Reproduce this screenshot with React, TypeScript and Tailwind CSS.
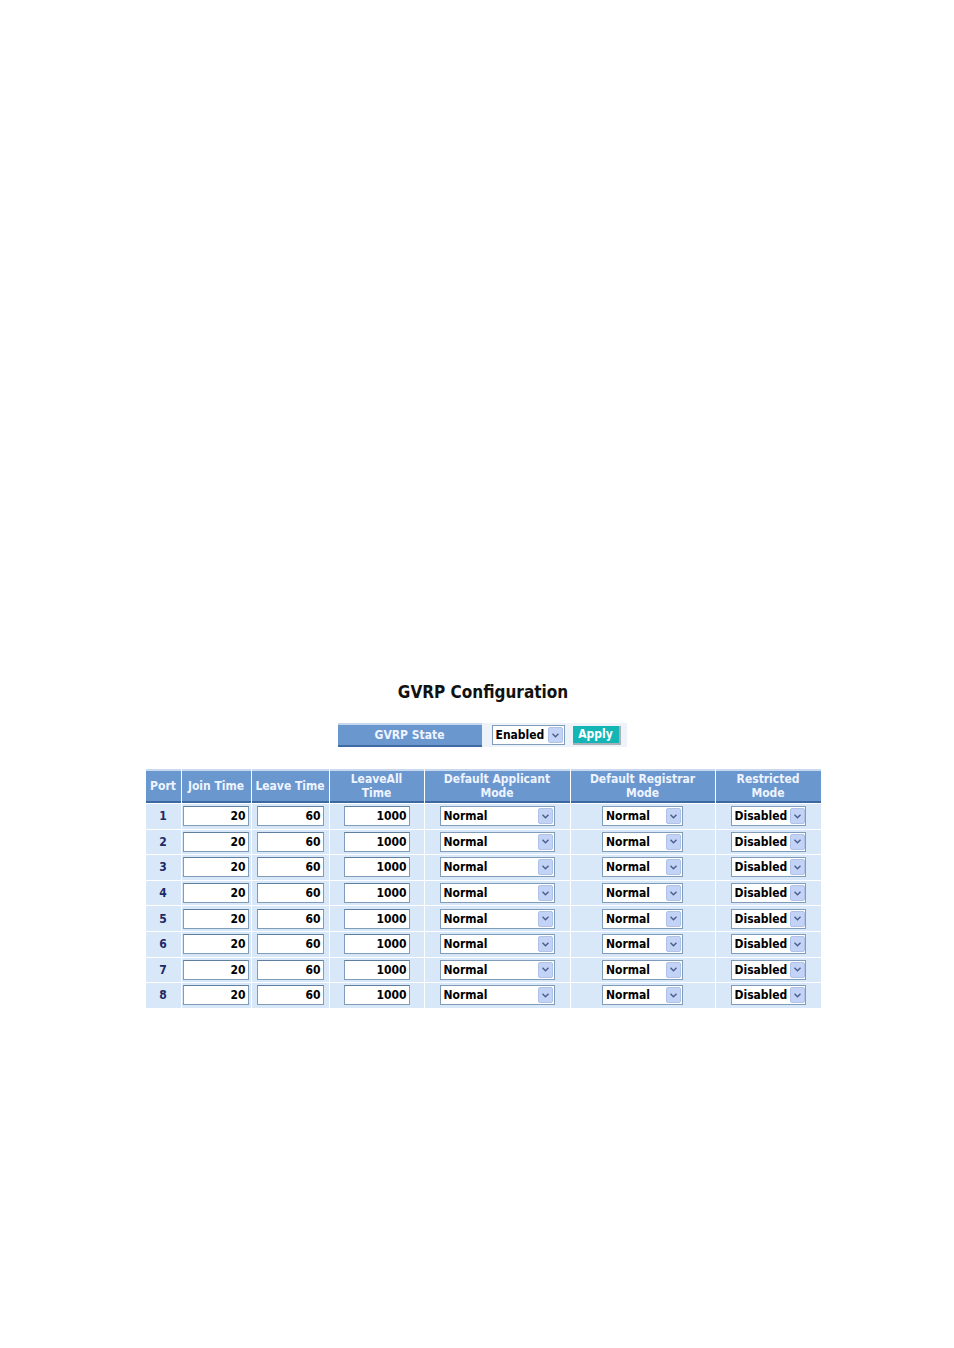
const ports = [1, 2, 3, 4, 5, 6, 7, 8];

const font = { fontFamily: '"DejaVu Sans Condensed", "Noto Sans", Tahoma, sans-serif' };

function Arrow() {
  return (
    <span className="flex h-[16px] w-[15px] shrink-0 items-center justify-center rounded-[2px] bg-[#c3d3f5] border border-[#b0c2ea]">
      <svg width="7" height="5" viewBox="0 0 7 5">
        <path d="M0.5 0.8 L3.5 3.8 L6.5 0.8" fill="none" stroke="#4a5f8c" strokeWidth="1.4" />
      </svg>
    </span>
  );
}

function Select({ value, width }: { value: string; width: string }) {
  return (
    <div className={`flex h-[20px] items-center justify-between gap-[3px] bg-white border border-[#7f9db9] pl-[3px] pr-[1px] ${width}`}>
      <span className="text-[12px] font-bold leading-none text-black">{value}</span>
      <Arrow />
    </div>
  );
}

function NumInput({ value, width }: { value: string; width: string }) {
  return (
    <div className={`flex h-[20px] items-center justify-end bg-white border border-[#7f9db9] border-t-[#5f7f9f] pr-[2px] ${width}`}>
      <span className="text-[12px] font-bold leading-none text-black">{value}</span>
    </div>
  );
}

const headers = [
  { label: ["Port"], w: "w-[35px]" },
  { label: ["Join Time"], w: "w-[69px]" },
  { label: ["Leave Time"], w: "w-[77px]" },
  { label: ["LeaveAll", "Time"], w: "w-[94px]" },
  { label: ["Default Applicant", "Mode"], w: "w-[145px]" },
  { label: ["Default Registrar", "Mode"], w: "w-[144px]" },
  { label: ["Restricted", "Mode"], w: "w-[105px]" },
];

export default function App() {
  return (
    <div className="min-h-[1348px] w-full bg-white" style={font}>
      <div className="flex flex-col items-center pt-[681px]">
        <h1 className="ml-[12px] text-[17px] font-bold leading-[22px] text-[#111]">GVRP Configuration</h1>

        {/* GVRP state */}
        <div className="mt-[20px] ml-[10px] flex h-[24px] items-stretch bg-[#eef3fa] pr-[6px]">
          <div className="flex w-[144px] items-center justify-center border-t-[2px] border-t-[#c6d7ee] border-b-[2px] border-b-[#3f6aa3] bg-[#6b97cf] text-[12px] font-bold text-[#eef4ff]">
            GVRP State
          </div>
          <div className="flex items-center gap-[8px] pl-[10px]">
            <Select value="Enabled" width="w-[73px]" />
            <button className="h-[19px] w-[48px] border-r-[2px] border-b-[2px] border-[#a9b1b8] bg-[#14b5b5] text-[12px] font-bold leading-none text-white">
              Apply
            </button>
          </div>
        </div>

        {/* table */}
        <div className="mt-[22px] ml-[12px] flex flex-col gap-y-px">
          <div className="flex gap-x-px">
            {headers.map((h) => (
              <div
                key={h.label.join()}
                className={`flex h-[34px] flex-col items-center justify-center border-t-[2px] border-t-[#c9d9ef] border-b-[2px] border-b-[#3d69a2] bg-[#6b97cf] text-[12px] font-bold leading-[14px] text-[#eef4ff] ${h.w}`}
              >
                {h.label.map((l) => (
                  <span key={l}>{l}</span>
                ))}
              </div>
            ))}
          </div>
          {ports.map((p) => (
            <div key={p} className="flex h-[24.6px] gap-x-px">
              <div className="flex w-[35px] items-center justify-center bg-[#d9e8f9] text-[12px] font-bold text-[#1c2a66]">{p}</div>
              <div className="flex w-[69px] items-center justify-start bg-[#d9e8f9] pl-[1px]">
                <NumInput value="20" width="w-[66px]" />
              </div>
              <div className="flex w-[77px] items-center justify-center bg-[#d9e8f9]">
                <NumInput value="60" width="w-[67px]" />
              </div>
              <div className="flex w-[94px] items-center justify-center bg-[#d9e8f9]">
                <NumInput value="1000" width="w-[66px]" />
              </div>
              <div className="flex w-[145px] items-center justify-center bg-[#d9e8f9]">
                <Select value="Normal" width="w-[115px]" />
              </div>
              <div className="flex w-[144px] items-center justify-center bg-[#d9e8f9]">
                <Select value="Normal" width="w-[81px]" />
              </div>
              <div className="flex w-[105px] items-center justify-center bg-[#d9e8f9]">
                <Select value="Disabled" width="w-[75px]" />
              </div>
            </div>
          ))}
        </div>
      </div>
    </div>
  );
}
